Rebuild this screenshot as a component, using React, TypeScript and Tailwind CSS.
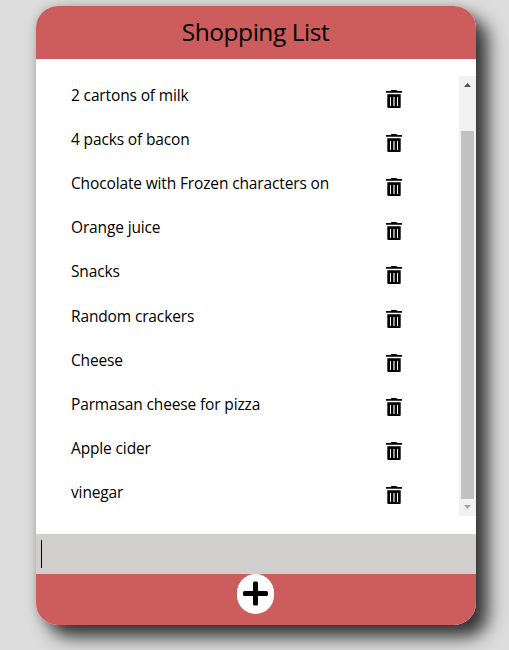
import React from "react";

const items = [
  "2 cartons of milk",
  "4 packs of bacon",
  "Chocolate with Frozen characters on",
  "Orange juice",
  "Snacks",
  "Random crackers",
  "Cheese",
  "Parmasan cheese for pizza",
  "Apple cider",
  "vinegar",
];

function Trash() {
  return (
    <svg width="16" height="18" viewBox="0 0 16 18" aria-hidden="true">
      <path d="M4.5 1 5.5 0h5l1 1H16v1.7H0V1Z" />
      <path
        fillRule="evenodd"
        d="M1.3 4.3h13.4V17q0 1-1 1H2.3q-1 0-1-1ZM4 7v9h1V7ZM7.4 7v9h1.2V7ZM11 7v9h1V7Z"
      />
    </svg>
  );
}

function Scrollbar() {
  return (
    <div className="flex w-[17px] flex-col items-center bg-[#f1f1f1]">
      <svg width="17" height="17" viewBox="0 0 17 17" className="shrink-0">
        <path d="M5 11 8.5 7l3.5 4Z" fill="#505050" />
      </svg>
      <div className="mt-[38px] h-[368px] w-[13px] bg-[#c1c1c1]" />
      <svg width="17" height="17" viewBox="0 0 17 17" className="shrink-0">
        <path d="M5 6h7l-3.5 4Z" fill="#a3a3a3" />
      </svg>
    </div>
  );
}

export default function App() {
  return (
    <main className="h-[650px] w-[509px] overflow-hidden bg-[#dcdcdc] pt-[6px] pl-9 font-['Open_Sans',sans-serif] text-black">
      <section className="flex h-[619px] w-[440px] flex-col overflow-hidden rounded-[22px] bg-white shadow-[12px_12px_17px_#333,0_0_10px_rgba(0,0,0,0.18)]">
        <header className="flex h-[53px] shrink-0 items-center justify-center bg-[#cd5c5c] pr-px">
          <h1 className="text-[24.5px] leading-none tracking-[-0.45px]">Shopping List</h1>
        </header>
        <div className="mt-[17px] flex h-[440px] shrink-0">
          <ul className="flex-1 pl-[35px]">
            {items.map((item) => (
              <li key={item} className="flex h-[44.1px]">
                <span className="w-[315px] pt-[8.1px] text-[15.5px] leading-[22px] tracking-[-0.14px] whitespace-nowrap">
                  {item}
                </span>
                <button aria-label="Delete" className="mt-[13.5px] h-[18px] w-4">
                  <Trash />
                </button>
              </li>
            ))}
          </ul>
          <Scrollbar />
        </div>
        <div className="mt-[18px] flex h-10 shrink-0 items-center bg-[#d0cfcd] pl-[5px]">
          <span className="h-7 w-px bg-black" />
        </div>
        <footer className="flex flex-1 items-start justify-center bg-[#cd5c5c]">
          <button aria-label="Add item" className="mr-px flex h-10 w-[37px] items-center justify-center rounded-[19px] bg-white pr-px pb-px">
            <svg width="25" height="25" viewBox="0 0 25 25">
              <path d="M10 2Q10 .5 11.5 .5h2Q15 .5 15 2v8h8.5Q25 10 25 11.5v2Q25 15 23.5 15H15v8q0 1.5-1.5 1.5h-2Q10 24.5 10 23v-8H1.5Q0 15 0 13.5v-2Q0 10 1.5 10H10Z" />
            </svg>
          </button>
        </footer>
      </section>
    </main>
  );
}
